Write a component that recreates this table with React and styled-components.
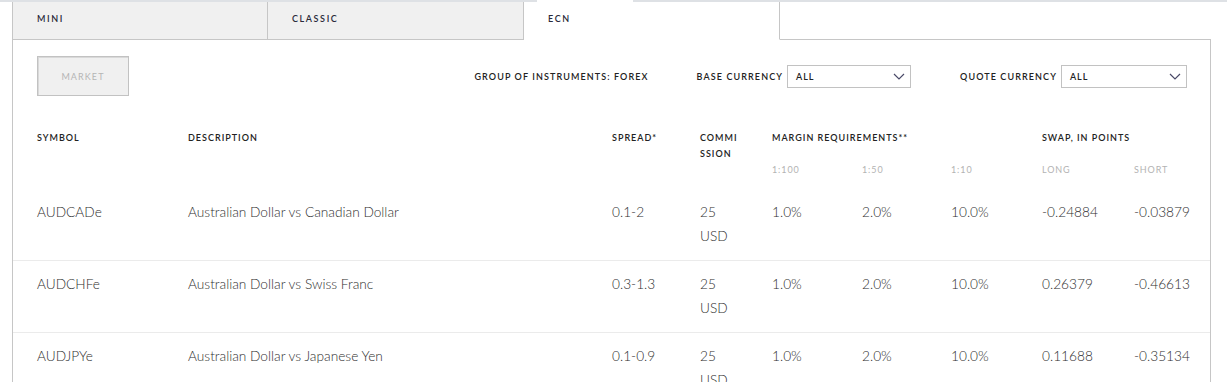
import React from 'react';
import styled, { createGlobalStyle } from 'styled-components';

const GlobalStyle = createGlobalStyle`
  html, body {
    margin: 0;
    padding: 0;
    background: #fff;
    font-family: Lato, "Noto Sans", sans-serif;
    color: #333;
  }
`;

const Page = styled.div`
  width: 1227px;
  overflow: hidden;
`;

const TopStrip = styled.div`
  display: flex;
  height: 2px;
`;

const StripPiece = styled.span`
  height: 2px;
  background: ${p => (p.gap ? '#fff' : '#dee1e5')};
  width: ${p => (p.w ? `${p.w}px` : 'auto')};
  flex: ${p => (p.w ? 'none' : '1')};
  border-radius: ${p => (p.gap ? '0 0 3px 3px' : '0')};
`;

const Wrap = styled.div`
  margin: 0 16px 0 12px;
`;

const Tabs = styled.div`
  display: flex;
`;

const Tab = styled.div`
  height: 37px;
  display: flex;
  align-items: flex-start;
  border-right: 1px solid #c6c6c6;
  border-left: ${p => (p.first ? '1px solid #c6c6c6' : 'none')};
  border-bottom: 1px solid ${p => (p.active ? 'transparent' : '#c6c6c6')};
  background: ${p => (p.active ? '#fff' : '#f0f0f0')};
  width: ${p => (p.first ? '254px' : '255px')};
`;

const TabLabel = styled.span`
  padding: 10px 0 0 24px;
  font-size: 9px;
  line-height: 14px;
  font-weight: 600;
  letter-spacing: 1.6px;
  color: #2a2a3a;
`;

const TabFiller = styled.div`
  flex: 1;
  border-bottom: 1px solid #c6c6c6;
`;

const Panel = styled.div`
  border-left: 1px solid #c6c6c6;
  border-right: 1px solid #c6c6c6;
`;

const Filters = styled.div`
  display: flex;
  align-items: center;
  padding: 16px 23px 15px 24px;
`;

const MarketButton = styled.button`
  width: 92px;
  height: 40px;
  background: #f0f0f0;
  border: 1px solid #c2c2c2;
  box-shadow: inset 1px 1px 0 #d9d9d9;
  font-family: inherit;
  font-size: 9px;
  font-weight: 400;
  letter-spacing: 1.1px;
  color: #b5b5b5;
  padding: 0;
`;

const Label = styled.span`
  font-size: 9px;
  font-weight: 600;
  letter-spacing: 1.1px;
  color: #222;
  margin-left: ${p => (p.push ? 'auto' : `${p.gap || 0}px`)};
  margin-right: 4px;
  white-space: nowrap;
`;

const Select = styled.div`
  width: ${p => p.w}px;
  height: 23px;
  box-sizing: border-box;
  border: 1px solid #c2c2c2;
  display: flex;
  align-items: center;
  justify-content: space-between;
  padding: 0 5px 0 8px;
  font-size: 9px;
  font-weight: 600;
  letter-spacing: 0.9px;
  color: #222;
`;

const Chevron = () => (
  <svg width="12" height="7" viewBox="0 0 12 7">
    <polyline points="1,1 6,6 11,1" fill="none" stroke="#4a4a68" strokeWidth="1.2" />
  </svg>
);

const Grid = styled.div`
  display: grid;
  grid-template-columns: 151px 424px 88px 72px 90px 89px 91px 92px 1fr;
  padding-left: 24px;
`;

const Head = styled(Grid)`
  padding-top: 19px;
  padding-bottom: 10px;
  grid-template-rows: 32px 16px;
`;

const HeadCell = styled.div`
  font-size: 9px;
  line-height: 16px;
  font-weight: 600;
  letter-spacing: 1px;
  color: #222;
  grid-column: ${p => p.span || 'auto'};
`;

const SubCell = styled.div`
  font-size: 9px;
  line-height: 16px;
  font-weight: 400;
  letter-spacing: 0.9px;
  color: #b3b3b3;
  grid-row: 2;
  grid-column: ${p => p.col};
`;

const Row = styled(Grid)`
  border-top: 1px solid ${p => (p.first ? 'transparent' : '#ebebeb')};
  padding-top: 11px;
  padding-bottom: 12px;
`;

const Cell = styled.div`
  font-size: 13.7px;
  line-height: 24px;
  font-weight: 300;
  color: #2e2e2e;
  max-width: ${p => (p.narrow ? '30px' : 'none')};
`;

const rows = [
  ['AUDCADe', 'Australian Dollar vs Canadian Dollar', '0.1-2', '-0.24884', '-0.03879'],
  ['AUDCHFe', 'Australian Dollar vs Swiss Franc', '0.3-1.3', '0.26379', '-0.46613'],
  ['AUDJPYe', 'Australian Dollar vs Japanese Yen', '0.1-0.9', '0.11688', '-0.35134'],
];

export default function App() {
  return (
    <Page>
      <GlobalStyle />
      <TopStrip>
        <StripPiece w={537} />
        <StripPiece w={96} gap />
        <StripPiece />
      </TopStrip>
      <Wrap>
        <Tabs>
          <Tab first>
            <TabLabel>MINI</TabLabel>
          </Tab>
          <Tab>
            <TabLabel>CLASSIC</TabLabel>
          </Tab>
          <Tab active>
            <TabLabel>ECN</TabLabel>
          </Tab>
          <TabFiller />
        </Tabs>
        <Panel>
          <Filters>
            <MarketButton>MARKET</MarketButton>
            <Label push>GROUP OF INSTRUMENTS: FOREX</Label>
            <Label gap={44}>BASE CURRENCY</Label>
            <Select w={124}>
              ALL
              <Chevron />
            </Select>
            <Label gap={49}>QUOTE CURRENCY</Label>
            <Select w={126}>
              ALL
              <Chevron />
            </Select>
          </Filters>
          <Head>
            <HeadCell>SYMBOL</HeadCell>
            <HeadCell>DESCRIPTION</HeadCell>
            <HeadCell>SPREAD*</HeadCell>
            <HeadCell>
              COMMI
              <br />
              SSION
            </HeadCell>
            <HeadCell span="span 3">MARGIN REQUIREMENTS**</HeadCell>
            <HeadCell span="span 2">SWAP, IN POINTS</HeadCell>
            <SubCell col={5}>1:100</SubCell>
            <SubCell col={6}>1:50</SubCell>
            <SubCell col={7}>1:10</SubCell>
            <SubCell col={8}>LONG</SubCell>
            <SubCell col={9}>SHORT</SubCell>
          </Head>
          {rows.map((r, i) => (
            <Row key={r[0]} first={i === 0}>
              <Cell>{r[0]}</Cell>
              <Cell>{r[1]}</Cell>
              <Cell>{r[2]}</Cell>
              <Cell narrow>25 USD</Cell>
              <Cell>1.0%</Cell>
              <Cell>2.0%</Cell>
              <Cell>10.0%</Cell>
              <Cell>{r[3]}</Cell>
              <Cell>{r[4]}</Cell>
            </Row>
          ))}
        </Panel>
      </Wrap>
    </Page>
  );
}
